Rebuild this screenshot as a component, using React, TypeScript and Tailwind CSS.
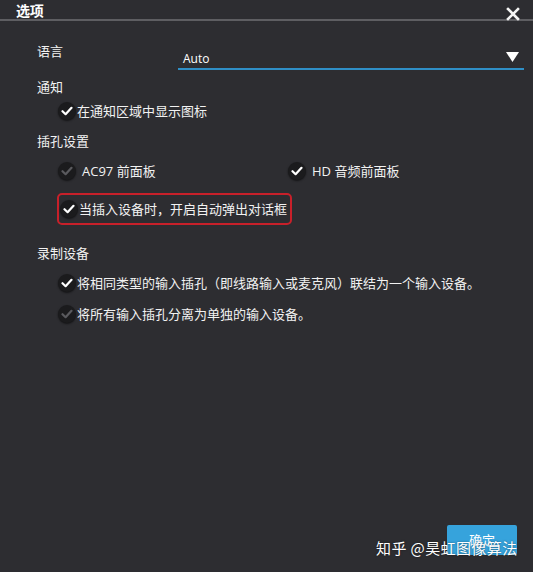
import React from "react";

const font = { fontFamily: '"Noto Sans CJK SC", "Microsoft YaHei", sans-serif' };

function Check({ disabled = false }: { disabled?: boolean }) {
  return (
    <span className="flex h-[18px] w-[18px] shrink-0 items-center justify-center rounded-full bg-[#1b1b1d] shadow-[0_1px_2px_rgba(0,0,0,0.6)]">
      <svg width="12" height="10" viewBox="0 0 12 10">
        <path
          d="M1.5 5.2 L4.6 8.2 L10.5 1.8"
          fill="none"
          stroke={disabled ? "#5a5a5e" : "#ffffff"}
          strokeWidth="2.2"
          strokeLinecap="round"
          strokeLinejoin="round"
        />
      </svg>
    </span>
  );
}

function Row({ children, disabled = false, gap = "gap-[1px]" }: { children: React.ReactNode; disabled?: boolean; gap?: string }) {
  return (
    <div className={`flex items-center ${gap}`}>
      <Check disabled={disabled} />
      <span className="text-[13px] leading-[18px] text-[#f2f2f2]">{children}</span>
    </div>
  );
}

export default function App() {
  return (
    <div className="relative h-[572px] w-[533px] overflow-hidden bg-[#2d2d31] text-white" style={font}>
      <div className="flex h-[21px] items-start justify-between border-b-2 border-[#5e5e62] pl-[16px] pr-[13px]">
        <span className="text-[14px] font-bold leading-[20px] tracking-tight">选项</span>
        <svg width="14" height="14" viewBox="0 0 14 14" className="mt-[7px]">
          <path d="M2 2 L12 12 M12 2 L2 12" stroke="#f4f4f4" strokeWidth="2.6" strokeLinecap="square" />
        </svg>
      </div>

      <div className="pl-[37px]">
        <div className="mt-[20px] flex h-[29px] items-start">
          <span className="w-[141px] text-[13px] leading-[20px] text-[#f2f2f2]">语言</span>
          <div className="mr-[9px] flex h-[29px] flex-1 items-end border-b-2 border-[#2f8fc6] pl-[5px] pr-[5px]">
            <span className="flex-1 text-[12px] leading-[18px]" style={{ fontFamily: '"Open Sans", "Noto Sans", sans-serif' }}>Auto</span>
            <svg width="13" height="10" viewBox="0 0 13 10" className="mb-[6px]">
              <path d="M0 0 H13 L6.5 10 Z" fill="#ffffff" />
            </svg>
          </div>
        </div>

        <div className="mt-[7px] text-[13px] leading-[20px] text-[#f2f2f2]">通知</div>
        <div className="ml-[21px] mt-[5px]">
          <Row>在通知区域中显示图标</Row>
        </div>

        <div className="mt-[11px] text-[13px] leading-[20px] text-[#f2f2f2]">插孔设置</div>
        <div className="ml-[21px] mt-[11px] flex">
          <div className="w-[230px]">
            <Row disabled gap="gap-[6px]">
              <span style={{ fontFamily: '"Open Sans", "Noto Sans CJK SC", sans-serif' }}>AC97 </span>前面板
            </Row>
          </div>
          <Row gap="gap-[6px]">
            <span style={{ fontFamily: '"Open Sans", "Noto Sans CJK SC", sans-serif' }}>HD </span>音频前面板
          </Row>
        </div>
        <div className="ml-[20px] mt-[13px] flex h-[32px] w-[235px] items-center rounded-[5px] border-2 border-[#c8202a] pl-[1px]">
          <Row>当插入设备时，开启自动弹出对话框</Row>
        </div>

        <div className="mt-[18px] text-[13px] leading-[20px] text-[#f2f2f2]">录制设备</div>
        <div className="ml-[21px] mt-[11px] flex flex-col gap-[13px]">
          <Row>将相同类型的输入插孔（即线路输入或麦克风）联结为一个输入设备。</Row>
          <Row disabled>将所有输入插孔分离为单独的输入设备。</Row>
        </div>
      </div>

      <div className="absolute bottom-[17px] right-[16px] flex h-[30px] w-[70px] items-center justify-center rounded-[2px] bg-[#36a3dc] text-[13px] text-white">
        确定
      </div>
      <div className="absolute left-[376px] top-[537px] text-[15px] leading-[22px] tracking-[0.4px] text-white" style={{ textShadow: "0 0 2px rgba(0,0,0,0.5)" }}>
        知乎 @昊虹图像算法
      </div>
    </div>
  );
}
